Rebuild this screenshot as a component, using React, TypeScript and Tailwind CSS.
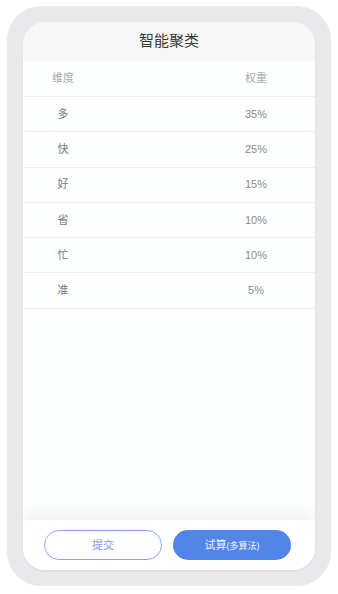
const rows = [
  { name: "多", weight: "35%" },
  { name: "快", weight: "25%" },
  { name: "好", weight: "15%" },
  { name: "省", weight: "10%" },
  { name: "忙", weight: "10%" },
  { name: "准", weight: "5%" },
];

const font = {
  fontFamily: '"Liberation Sans", "Noto Sans CJK SC", sans-serif',
};

export default function App() {
  return (
    <div className="bg-white w-[338px] h-[594px] pt-[6px] pl-[7px]" style={font}>
      <div className="w-[324px] h-[580px] rounded-[34px] bg-[#e9e9eb] p-4">
        <div className="flex flex-col h-full rounded-[22px] bg-[#fdfefe] overflow-hidden shadow-[0_1px_3px_rgba(0,0,0,0.06)]">
          {/* 标题 */}
          <div className="h-[39px] bg-[#f7f7f7] flex items-center justify-center text-[15px] text-[#3a3a3a]">
            智能聚类
          </div>

          {/* 表头 */}
          <div className="h-[36px] flex items-center justify-between border-b border-[#efefef] text-[11px] text-[#aaaaaa]">
            <div className="w-[80px] text-center">维度</div>
            <div className="w-[118px] text-center">权重</div>
          </div>

          {rows.map((row) => (
            <div
              key={row.name}
              className="h-[35.3px] flex items-center justify-between border-b border-[#efefef] text-[11px] text-[#7a7a7a]"
            >
              <div className="w-[80px] text-center">{row.name}</div>
              <div className="w-[118px] text-center text-[#8a8a8a]">{row.weight}</div>
            </div>
          ))}

          <div className="flex-1" />

          {/* 底部按钮 */}
          <div className="h-[50px] bg-white flex items-center gap-[11px] px-[21px] shadow-[0_-8px_14px_rgba(0,0,0,0.05)]">
            <button className="w-[118px] h-[30px] rounded-full border border-[#89a9ef] text-[11px] text-[#7b9ae3]">
              提交
            </button>
            <button className="w-[118px] h-[30px] rounded-full bg-[#5285ea] text-[11px] text-[#eef3fd]">
              试算<span className="text-[9px]">(多算法)</span>
            </button>
          </div>
        </div>
      </div>
    </div>
  );
}
